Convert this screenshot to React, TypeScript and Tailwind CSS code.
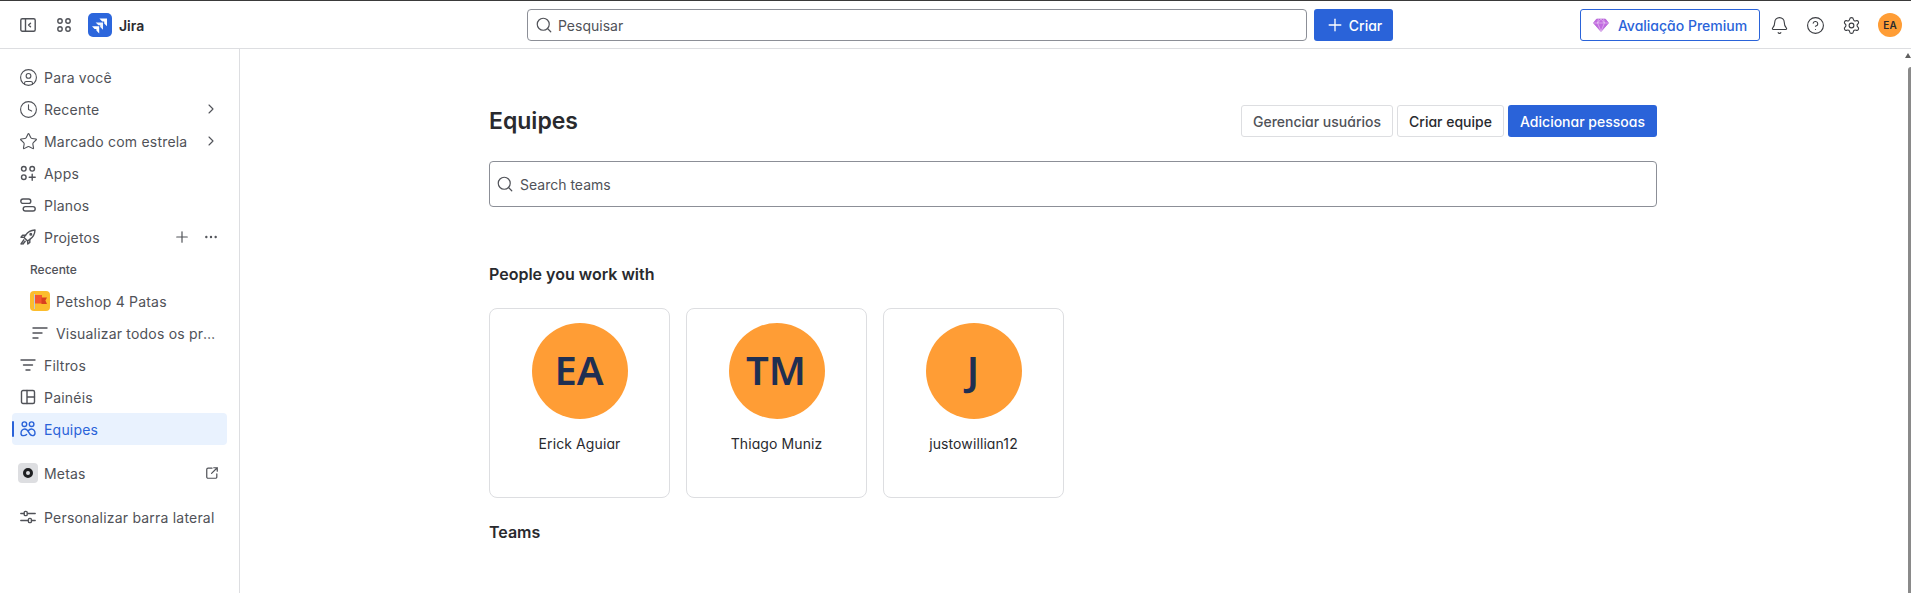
import * as React from "react";
import { Plus, ChevronRight, Ellipsis, Search, Bell, CircleHelp, Settings, Clock, Star, CircleUser } from "lucide-react";

type IconProps = { className?: string };

function Svg({ className, children }: IconProps & { children: React.ReactNode }) {
  return (
    <svg viewBox="0 0 16 16" fill="none" stroke="currentColor" strokeWidth="1.4" strokeLinecap="round" strokeLinejoin="round" className={className}>
      {children}
    </svg>
  );
}

const PanelIcon = ({ className }: IconProps) => (
  <Svg className={className}>
    <rect x="0.8" y="1.8" width="14.4" height="12.4" rx="1.5" />
    <path d="M5.5 2v12M10.5 6.2 8.6 8l1.9 1.8" />
  </Svg>
);
const GridIcon = ({ className }: IconProps) => (
  <Svg className={className}>
    <circle cx="4" cy="4" r="2.2" />
    <circle cx="12" cy="4" r="2.2" />
    <circle cx="4" cy="12" r="2.2" />
    <circle cx="12" cy="12" r="2.2" />
  </Svg>
);
const AppsIcon = ({ className }: IconProps) => (
  <Svg className={className}>
    <circle cx="3.8" cy="3.8" r="2.3" />
    <circle cx="12.2" cy="3.8" r="2.3" />
    <circle cx="3.8" cy="12.2" r="2.3" />
    <path d="M12.2 9.2v6M9.2 12.2h6" />
  </Svg>
);
const PlansIcon = ({ className }: IconProps) => (
  <Svg className={className}>
    <rect x="0.8" y="2" width="10" height="4.4" rx="2.2" />
    <rect x="3.2" y="9.6" width="12" height="4.4" rx="2.2" />
  </Svg>
);
const RocketIcon = ({ className }: IconProps) => (
  <Svg className={className}>
    <path d="M5.6 6.2C7.6 3.2 10.6 1.2 15 1c-.2 4.4-2.2 7.4-5.2 9.4L7.6 12 4 8.4z" />
    <path d="M5.6 6.2H2.6L1 8.2l3 .2M9.8 10.4v3L7.8 15l-.2-3M3.8 10.8 1 15l1-.1M5.2 12.2 3 15" />
    <circle cx="10.8" cy="5.2" r="0.8" />
  </Svg>
);
const ListIcon = ({ className }: IconProps) => (
  <Svg className={className}>
    <path d="M1 3h14M1 8h9M1 13h5" />
  </Svg>
);
const FilterIcon = ({ className }: IconProps) => (
  <Svg className={className}>
    <path d="M1 3h14M3.5 8h9M6 13h4" />
  </Svg>
);
const BoardIcon = ({ className }: IconProps) => (
  <Svg className={className}>
    <rect x="1.5" y="1.5" width="13" height="13" rx="1.5" />
    <path d="M7 1.5v13M7 8h7.5" />
  </Svg>
);
const PeopleIcon = ({ className }: IconProps) => (
  <Svg className={className}>
    <circle cx="4.4" cy="3.2" r="2.3" />
    <circle cx="11.6" cy="3.2" r="2.3" />
    <path d="M1 12.4C1 10 2.6 8 4.8 8 7 8 8 9.8 8.8 11.4 9.6 13 10.6 14.6 12.4 14.6 14 14.6 15 13.6 15 12.2 15 10 13.5 8 11.4 8 10 8 9 8.8 8.2 9.8M1 12.4C1 13.8 2 14.6 3.6 14.6 4.8 14.6 5.8 14.2 6.6 13.4" />
  </Svg>
);
const SlidersIcon = ({ className }: IconProps) => (
  <Svg className={className}>
    <path d="M0.8 4.5h3M8 4.5h7.2M0.8 11.5h7M12.2 11.5h3" />
    <rect x="4.2" y="2.4" width="3" height="4.2" rx="1.2" />
    <rect x="8.4" y="9.4" width="3" height="4.2" rx="1.2" />
  </Svg>
);
const ExternalIcon = ({ className }: IconProps) => (
  <Svg className={className}>
    <path d="M8 2.5H3.5a1.5 1.5 0 0 0-1.5 1.5v8.5A1.5 1.5 0 0 0 3.5 14H12a1.5 1.5 0 0 0 1.5-1.5V9M10 2h4v4M14 2 7.5 8.5" />
  </Svg>
);

function JiraLogo() {
  return (
    <div className="flex h-6 w-6 items-center justify-center rounded-[5px] bg-[#2c66dc]">
      <svg viewBox="0 0 24 24" className="h-6 w-6" fill="#ffffff">
        <path d="M11.4 5.6h7.6v7.6l-2.8-2.8V8.4h-2z" />
        <path d="M7.6 9.4h7.4v7.4l-2.8-2.8v-1.8h-1.8z" opacity="0.92" />
        <path d="M4 13.2h7.2v7.2l-2.8-2.8V16H6.6z" />
      </svg>
    </div>
  );
}

function FlagLogo() {
  return (
    <div className="flex h-5 w-5 items-center justify-center rounded-[4px] bg-[#fcbd2d]">
      <svg viewBox="0 0 20 20" className="h-5 w-5">
        <rect x="4" y="3" width="1" height="15" fill="#bfc9d9" />
        <path d="M5 4h7v8.5H5z" fill="#f4552f" />
        <path d="M11.5 6.5H17l-1.6 3L17 13h-5.5z" fill="#d8401f" />
      </svg>
    </div>
  );
}

function GemIcon() {
  return (
    <svg viewBox="0 0 16 16" className="h-4 w-4" fill="#c26be0" stroke="#a94fd0" strokeWidth="0.6" strokeLinejoin="round">
      <path d="M3.6 2h8.8L15.6 6 8 14.6.4 6z" />
      <path d="M.6 6h14.8M5.4 2 4.6 6 8 14.4 11.4 6l-.8-4M8 2 4.6 6M8 2l3.4 4" fill="none" stroke="#ffffff" strokeWidth="0.4" />
    </svg>
  );
}

function NavRow({
  icon,
  label,
  right,
  active,
}: {
  icon: React.ReactNode;
  label: string;
  right?: React.ReactNode;
  active?: boolean;
}) {
  return (
    <div
      className={`relative flex h-8 items-center gap-2 rounded pl-2 pr-2 ${
        active ? "bg-[#e9f2fe] text-[#2a63d9]" : "text-[#505258]"
      }`}
    >
      {active && <span className="absolute left-0 top-2 h-4 w-0.5 rounded-sm bg-[#2a63d9]" />}
      <span className="flex w-4 shrink-0 items-center justify-center">{icon}</span>
      <span className="flex-1 truncate tracking-[0.2px]">{label}</span>
      {right}
    </div>
  );
}

function Sidebar() {
  const icon = "h-4 w-4 shrink-0";
  const lucide = "h-[19px] w-[19px] shrink-0";
  const chevron = <ChevronRight className="h-4 w-4 text-[#505258]" strokeWidth={1.6} />;
  return (
    <aside className="flex w-[240px] shrink-0 flex-col border-r border-[#dddee1] px-3 pt-3 text-[14px]">
      <NavRow icon={<CircleUser className={lucide} strokeWidth={1.4} />} label="Para você" />
      <NavRow icon={<Clock className={lucide} strokeWidth={1.4} />} label="Recente" right={chevron} />
      <NavRow icon={<Star className={lucide} strokeWidth={1.4} />} label="Marcado com estrela" right={chevron} />
      <NavRow icon={<AppsIcon className={icon} />} label="Apps" />
      <NavRow icon={<PlansIcon className={icon} />} label="Planos" />
      <NavRow
        icon={<RocketIcon className={icon} />}
        label="Projetos"
        right={
          <span className="flex items-center gap-3">
            <Plus className="h-[18px] w-[18px] text-[#505258]" strokeWidth={1.6} />
            <Ellipsis className="h-4 w-4 text-[#505258]" strokeWidth={1.6} />
          </span>
        }
      />
      <div className="flex h-8 items-center pl-[18px] pt-px text-[12px] font-medium text-[#505258]">Recente</div>
      <div className="flex h-8 items-center gap-[6px] pl-[18px] pr-2 text-[#505258]">
        <FlagLogo />
        <span className="truncate tracking-[0.2px]">Petshop 4 Patas</span>
      </div>
      <div className="flex h-8 items-center gap-2 pl-[20px] pr-2 text-[#505258]">
        <ListIcon className="h-4 w-4 shrink-0" />
        <span className="truncate tracking-[0.2px]">Visualizar todos os projetos</span>
      </div>
      <NavRow icon={<FilterIcon className={icon} />} label="Filtros" />
      <NavRow icon={<BoardIcon className={icon} />} label="Painéis" />
      <NavRow active icon={<PeopleIcon className={icon} />} label="Equipes" />
      <div className="mt-3">
        <NavRow
          icon={
            <span className="flex h-5 w-5 shrink-0 items-center justify-center rounded-[4px] bg-[#dddee1]">
              <span className="h-2.5 w-2.5 rounded-full border-[3px] border-[#1e1f21]" />
            </span>
          }
          label="Metas"
          right={<ExternalIcon className="h-3.5 w-3.5 text-[#505258]" />}
        />
      </div>
      <div className="mt-3">
        <NavRow icon={<SlidersIcon className={icon} />} label="Personalizar barra lateral" />
      </div>
    </aside>
  );
}

function TopBar() {
  return (
    <header className="flex h-[48px] shrink-0 items-center border-b border-[#dddee1] pt-px text-[14px]">
      <div className="flex w-[527px] shrink-0 items-center pl-5">
        <PanelIcon className="h-4 w-4 text-[#505258]" />
        <GridIcon className="ml-5 h-4 w-4 text-[#505258]" />
        <div className="ml-4">
          <JiraLogo />
        </div>
        <span className="ml-[7px] font-semibold text-[#292a2e]">Jira</span>
      </div>
      <div className="flex h-8 w-[780px] items-center gap-[5px] rounded border border-[#8c8f97] px-[7px] text-[#505258]">
        <Search className="h-[18px] w-[18px]" strokeWidth={1.6} />
        <span>Pesquisar</span>
      </div>
      <button className="ml-[7px] flex h-8 w-[79px] items-center justify-center gap-1 rounded-[3px] bg-[#2a63d9] font-medium text-white [font-feature-settings:'cv11']">
        <Plus className="h-5 w-5" strokeWidth={1.6} />
        Criar
      </button>
      <div className="flex-1" />
      <button className="flex h-8 w-[180px] items-center justify-center gap-[9px] rounded-[3px] border border-[#2a63d9] font-medium text-[#2a63d9] [font-feature-settings:'cv11']">
        <GemIcon />
        Avaliação Premium
      </button>
      <div className="ml-[10px] flex items-center gap-[17px] text-[#3b3d42]">
        <Bell className="h-[19px] w-[19px]" strokeWidth={1.4} />
        <CircleHelp className="h-[19px] w-[19px]" strokeWidth={1.4} />
        <Settings className="h-[19px] w-[19px]" strokeWidth={1.4} />
      </div>
      <div className="ml-[17px] mr-[9px] flex h-6 w-6 items-center justify-center rounded-full bg-[#ff9d35] text-[10px] font-semibold text-[#292a2e]">
        EA
      </div>
    </header>
  );
}

function PersonCard({ initials, name }: { initials: string; name: string }) {
  return (
    <div className="flex h-[190px] w-[181px] flex-col items-center rounded-lg border border-[#dddee1] pt-[14px]">
      <div className="flex h-24 w-24 items-center justify-center rounded-full bg-[#ff9d35] pb-[2px] pr-px font-['Noto_Sans',sans-serif] text-[40px] font-semibold text-[#1f2f52]">
        {initials}
      </div>
      <div className="mt-[14px] text-[14px] tracking-[0.1px] text-[#292a2e] [font-feature-settings:'cv11']">{name}</div>
    </div>
  );
}

export default function App() {
  return (
    <div className="flex h-[593px] flex-col overflow-hidden border-t border-[#3a3a3a] bg-white font-['Inter',sans-serif]">
      <TopBar />
      <div className="relative flex min-h-0 flex-1">
        <Sidebar />
        <main className="flex-1 pl-[249px] pt-[56px]">
          <div className="w-[1168px]">
            <div className="flex h-8 items-center justify-between">
              <h1 className="text-[23px] font-semibold text-[#292a2e]">Equipes</h1>
              <div className="flex gap-1 text-[14px] font-medium [font-feature-settings:'cv11']">
                <button className="h-8 w-[152px] rounded-[3px] border border-[#dddee1] text-[#505258]">Gerenciar usuários</button>
                <button className="h-8 w-[107px] rounded-[3px] border border-[#dddee1] text-[#292a2e]">Criar equipe</button>
                <button className="h-8 w-[149px] rounded-[3px] bg-[#2a63d9] text-white">Adicionar pessoas</button>
              </div>
            </div>
            <div className="mt-6 flex h-[46px] items-center gap-[6px] rounded border border-[#8c8f97] px-[6px] text-[14px] text-[#505258]">
              <Search className="h-[18px] w-[18px]" strokeWidth={1.6} />
              <span>Search teams</span>
            </div>
            <h2 className="mt-[55px] text-[16px] font-semibold text-[#292a2e]">People you work with</h2>
            <div className="mt-[22px] flex gap-4">
              <PersonCard initials="EA" name="Erick Aguiar" />
              <PersonCard initials="TM" name="Thiago Muniz" />
              <PersonCard initials="J" name="justowillian12" />
            </div>
            <h2 className="mt-[22px] text-[16px] font-semibold text-[#292a2e]">Teams</h2>
          </div>
        </main>
        <div className="absolute right-0 top-[4px] flex w-[5px] flex-col items-end">
          <div className="mb-[9px] h-0 w-0 border-x-[3px] border-b-[5px] border-x-transparent border-b-[#606060]" />
          <div className="h-[540px] w-[3px] rounded-l bg-[#8a8a8a]" />
        </div>
      </div>
    </div>
  );
}
